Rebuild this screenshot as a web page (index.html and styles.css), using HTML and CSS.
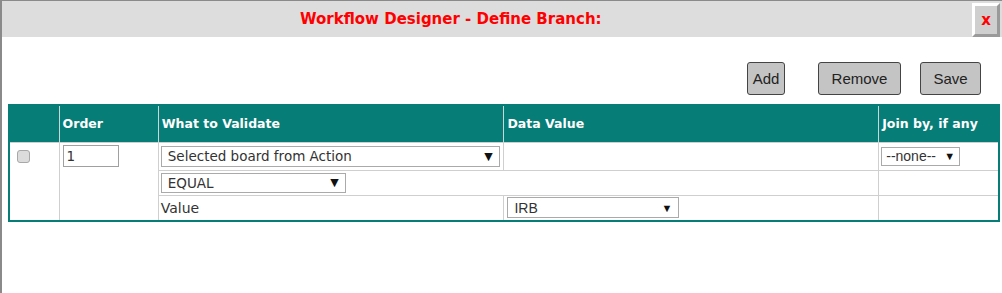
FILE: index.html
```html
<html>
<head>
<title>Workflow Designer - Define Branch</title>
<link rel="stylesheet" href="styles.css">
</head>
<body>
<div class="dialog">
  <div class="titlebar">
    <div class="title">Workflow Designer - Define Branch:</div>
    <div class="close">x</div>
  </div>

  <div class="toolbar">
    <button class="btn btn-add">Add</button>
    <button class="btn btn-remove">Remove</button>
    <button class="btn btn-save">Save</button>
  </div>

  <table class="grid">
    <colgroup>
      <col class="c-chk"><col class="c-ord"><col class="c-what"><col class="c-data"><col class="c-join">
    </colgroup>
    <tr class="head">
      <th></th>
      <th>Order</th>
      <th>What to Validate</th>
      <th>Data Value</th>
      <th>Join by, if any</th>
    </tr>
    <tr class="r1">
      <td rowspan="3" class="chk"><input type="checkbox" class="box"></td>
      <td rowspan="3" class="ord"><input type="text" class="txt" value="1"></td>
      <td><div class="sel sel-what"><span>Selected board from Action</span><i>&#9660;</i></div></td>
      <td></td>
      <td><div class="sel sel-none arial"><span>--none--</span><i>&#9660;</i></div></td>
    </tr>
    <tr class="r2">
      <td colspan="2"><div class="sel sel-op"><span>EQUAL</span><i>&#9660;</i></div></td>
      <td></td>
    </tr>
    <tr class="r3">
      <td class="label">Value</td>
      <td><div class="sel sel-irb arial"><span>IRB</span><i>&#9660;</i></div></td>
      <td></td>
    </tr>
  </table>
</div>
</body>
</html>
```

FILE: styles.css
```css
body{margin:0;background:#fff;font-family:"DejaVu Sans",Verdana,sans-serif;}

.dialog{
height:292px;
border-top:1px solid #8a8a8a;
border-left:2px solid #8a8a8a;
overflow:hidden;
}

/* title bar */
.titlebar{
display:flex;
align-items:center;
height:36px;
background-color:#dddddd;
}
.title{
flex:1;
padding-left:298px;
color:#f00;
font-weight:bold;
font-size:15px;
}
.close{
width:22px;
height:28px;
margin:2px 2px 0 0;
align-self:flex-start;
display:flex;
justify-content:center;
align-items:center;
background-color:#cfcfcf;
border-top:3px solid #fff;
border-left:3px solid #fff;
border-right:3px solid #9a9a9a;
border-bottom:3px solid #9a9a9a;
color:#f00;
font-weight:bold;
font-size:15px;
}

/* buttons */
.toolbar{
display:flex;
justify-content:flex-end;
padding:25px 21px 0 0;
height:33px;
}
.btn{
height:33px;
padding:0;
background-color:#c4c4c4;
border:1px solid #444;
border-radius:3px;
font-family:"Liberation Sans",Arial,sans-serif;
font-size:15px;
color:#222;
}
.btn-add{width:38px;}
.btn-remove{width:83px;margin-left:33px;}
.btn-save{width:61px;margin-left:19px;}

/* grid */
.grid{
margin:9px 0 0 6px;
width:992px;
border-collapse:collapse;
border:2px solid #077d77;
table-layout:fixed;
font-size:13px;
color:#333;
}
.c-chk{width:50px;}
.c-ord{width:99px;}
.c-what{width:345px;}
.c-data{width:374px;}
.c-join{width:120px;}

.grid th{
height:37px;
background-color:#077d77;
color:#fff;
text-align:left;
font-weight:bold;
font-size:12.5px;
padding:0 3px;
border-left:1px solid #c8d8d6;
}
.grid th:first-child{border-left:none;}
.grid td{
border:1px solid #cfcfcf;
padding:0 2px;
vertical-align:middle;
}
.grid .r1 td{height:28px;}
.grid .r2 td{height:25px;}
.grid .r3 td{height:26px;}
.grid td.chk,.grid td.ord{vertical-align:top;}
.grid td.label{font-size:14px;padding-left:2px;}

.box{
appearance:none;
margin:7px 0 0 5px;
width:13px;
height:13px;
border:1px solid #a8a8a8;
border-radius:3px;
background-color:#dcdcdc;
}
.txt{
margin:2px 0 0 1px;
width:56px;
height:22px;
box-sizing:border-box;
border:1px solid #a0a0a0;
padding:0 3px;
font-family:"DejaVu Sans",Verdana,sans-serif;
font-size:13.5px;
color:#333;
}

.sel{
display:flex;
align-items:center;
justify-content:space-between;
box-sizing:border-box;
border:1px solid #aaa;
background:#fff;
padding:0 6px 0 6px;
font-size:13.5px;
color:#333;
}
.sel i{font-style:normal;font-size:11px;color:#111;}
.arial{font-family:"Liberation Sans",Arial,sans-serif;font-size:14px;}
.sel-what{width:339px;height:21px;}
.sel-op{width:185px;height:20px;}
.sel-irb{width:172px;height:21px;margin-left:1px;}
.sel-none{width:79px;height:19px;padding:0 4px;}
```
